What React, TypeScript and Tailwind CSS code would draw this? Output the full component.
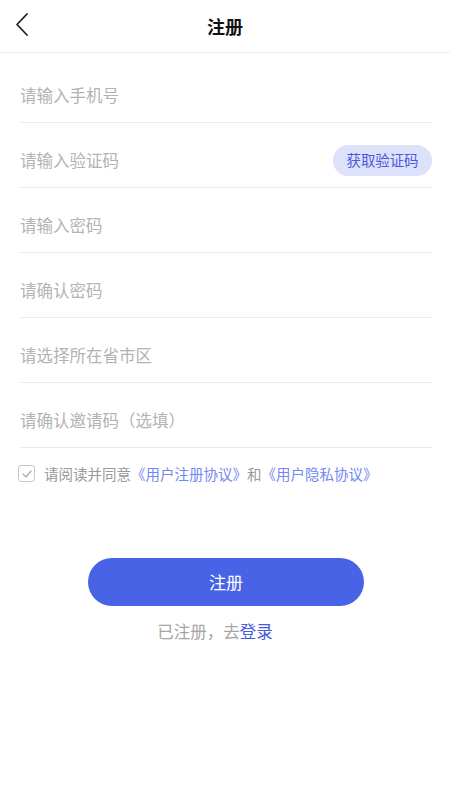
import React from 'react'

const FONT = '"Noto Sans CJK SC", "Liberation Sans", sans-serif'

const FIELDS = ['请输入手机号', '请输入验证码', '请输入密码', '请确认密码', '请选择所在省市区', '请确认邀请码（选填）']

export default function App() {
  return (
    <div className="w-[450px] min-h-[800px] bg-white" style={{ fontFamily: FONT }}>
      {/* Header */}
      <div className="relative h-[53px] flex items-center justify-center border-b border-[#eeeeee]">
        <button className="absolute left-[14px] top-[12px] p-0">
          <svg width="18" height="26" viewBox="0 0 18 26" fill="none" stroke="#222" strokeWidth="1.8">
            <path d="M13 2L3 12.5L13 23" strokeLinecap="round" strokeLinejoin="round" />
          </svg>
        </button>
        <h1 className="text-[18px] font-bold text-[#111] leading-none">注册</h1>
      </div>

      {/* Form */}
      <div className="pl-5 pr-[18px] pt-[5px]">
        {FIELDS.map((f, i) => (
          <div key={i} className="h-[65px] pt-[10px] flex items-center justify-between border-b border-[#ebebeb]">
            <span className="text-[16.5px] text-[#b3b3b3]">{f}</span>
            {i === 1 && (
              <span className="h-[31px] w-[99px] rounded-full bg-[#dde1f9] text-[#4a5ae0] text-[14.4px] flex items-center justify-center">
                获取验证码
              </span>
            )}
          </div>
        ))}

        <div className="flex items-center mt-[15px] ml-[-2px]">
          <span className="w-[17px] h-[17px] rounded-[3px] border border-[#c8c8c8] flex items-center justify-center">
            <svg width="10" height="8" viewBox="0 0 10 8" fill="none" stroke="#aaa" strokeWidth="1.2">
              <path d="M1 4l3 3L9 1" strokeLinecap="round" strokeLinejoin="round" />
            </svg>
          </span>
          <p className="ml-[9px] text-[14.5px] text-[#999]">
            请阅读并同意<span className="text-[#7288ef]">《用户注册协议》</span>和<span className="text-[#7288ef]">《用户隐私协议》</span>
          </p>
        </div>
      </div>

      {/* Submit */}
      <div className="flex flex-col items-center mt-[73px] ml-[2px]">
        <button className="w-[276px] h-[48px] rounded-full bg-[#4863e6] text-white text-[17px]">注册</button>
        <p className="mt-[13px] mr-[22px] text-[16.5px] text-[#a5a5a5]">
          已注册，去<span className="text-[#4a5ae0]">登录</span>
        </p>
      </div>
    </div>
  )
}
